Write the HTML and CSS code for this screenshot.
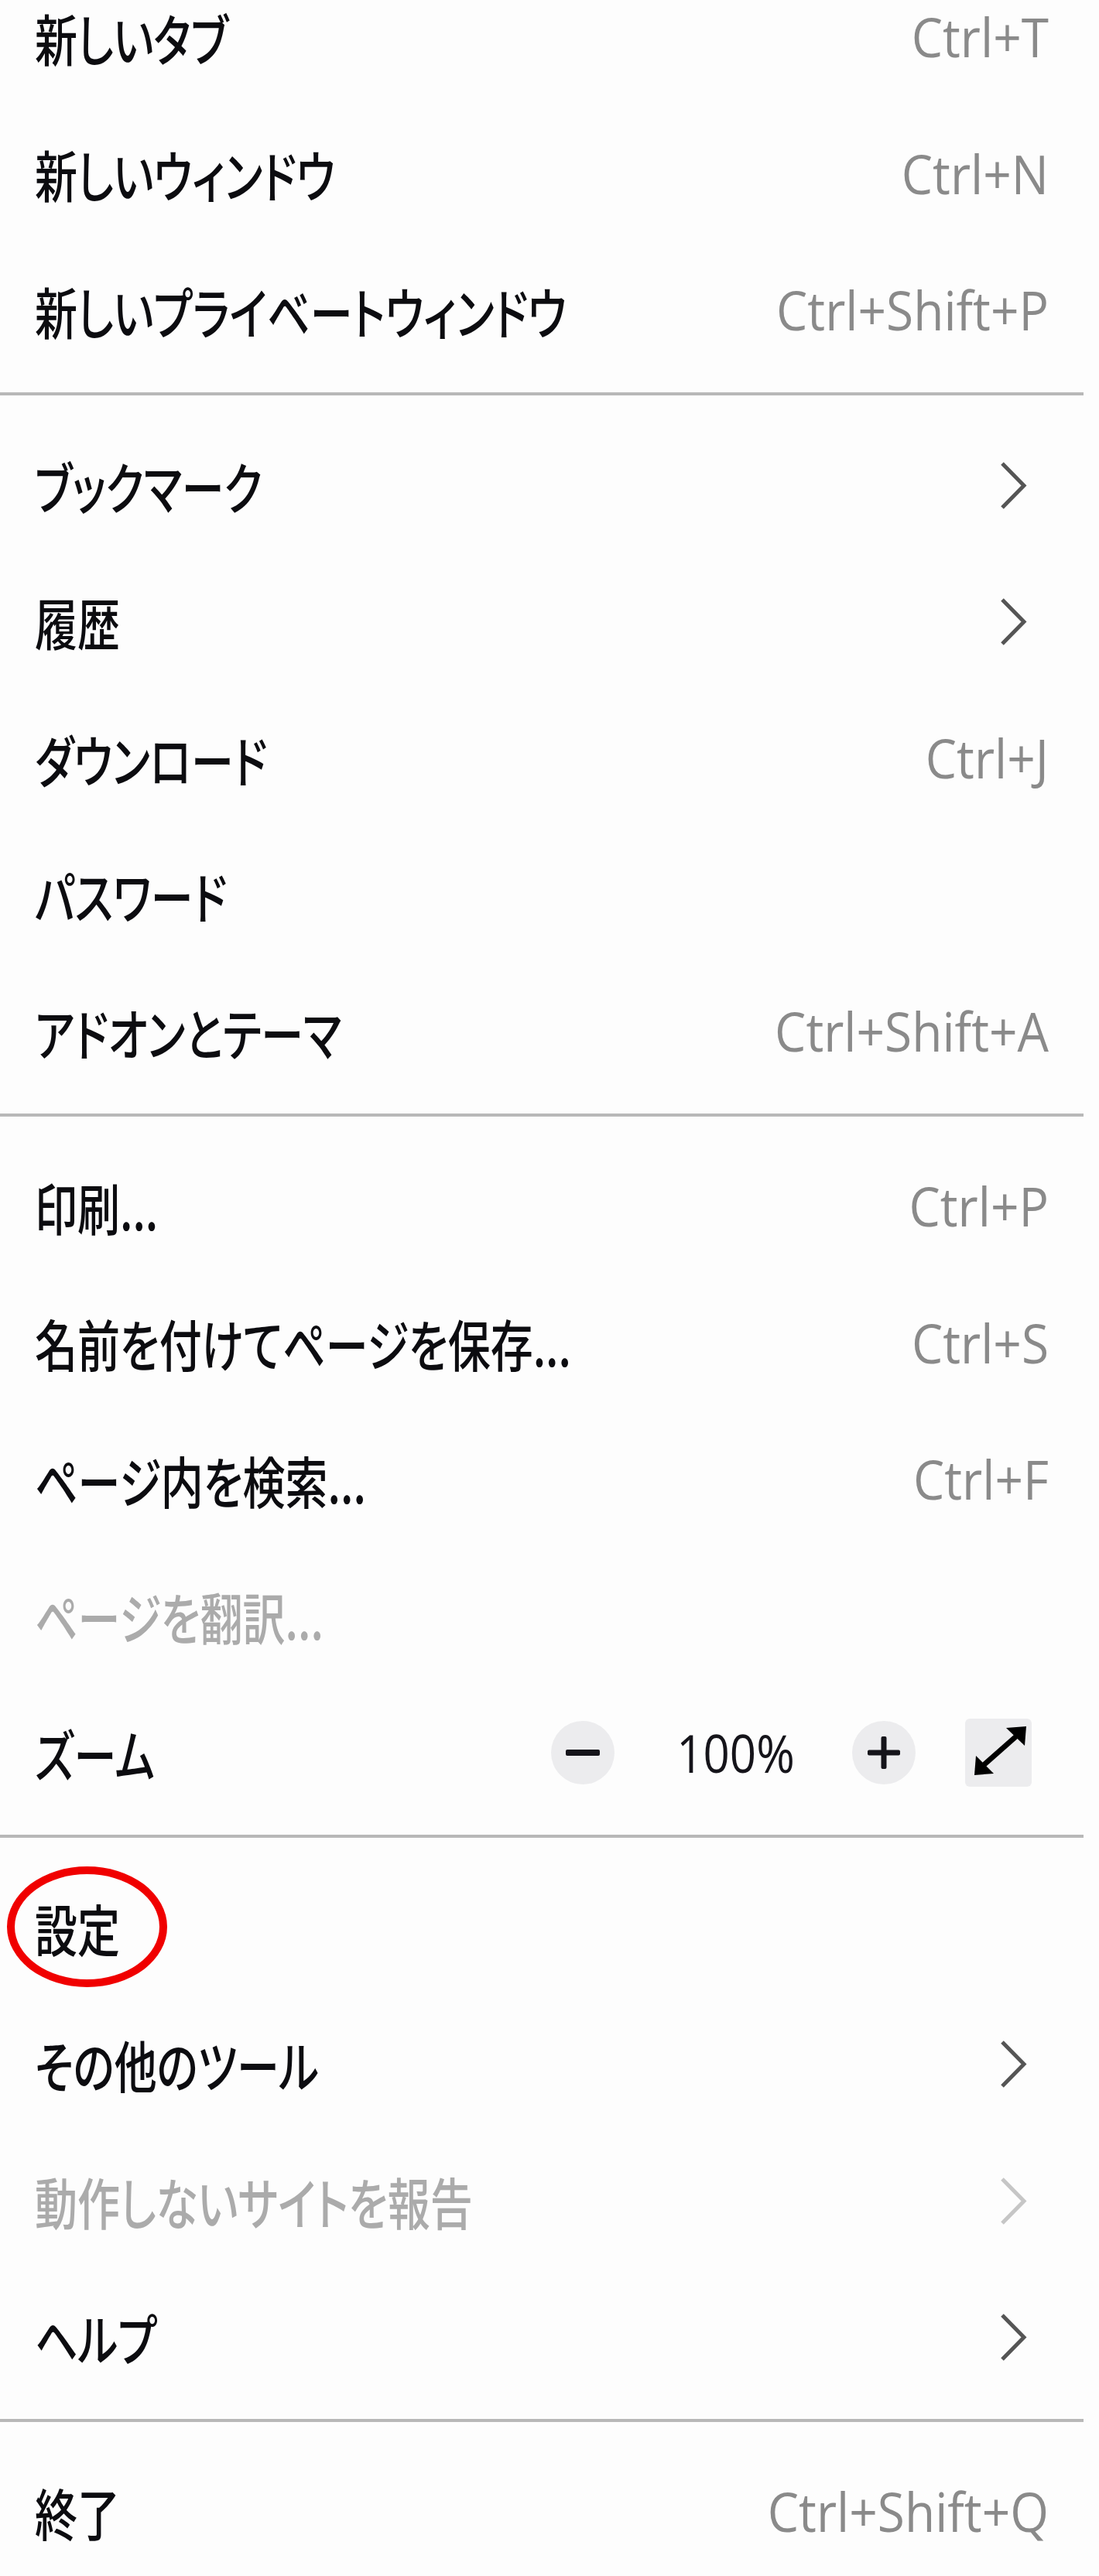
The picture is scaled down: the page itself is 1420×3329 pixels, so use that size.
FILE: index.html
```html
<!DOCTYPE html>
<html lang="ja">
<head>
<meta charset="utf-8">
<title>メニュー</title>
<link rel="stylesheet" href="styles.css">
</head>
<body>
<div class="menu">
  <div class="item"><span class="label">新しいタブ</span><span class="key">Ctrl+T</span></div>
  <div class="item"><span class="label">新しいウィンドウ</span><span class="key">Ctrl+N</span></div>
  <div class="item"><span class="label">新しいプライベートウィンドウ</span><span class="key">Ctrl+Shift+P</span></div>
  <div class="sep"></div>
  <div class="item"><span class="label">ブックマーク</span><svg class="chev" viewBox="0 0 38 65"><path d="M5 4 L33 32.5 L5 61"/></svg></div>
  <div class="item"><span class="label">履歴</span><svg class="chev" viewBox="0 0 38 65"><path d="M5 4 L33 32.5 L5 61"/></svg></div>
  <div class="item"><span class="label">ダウンロード</span><span class="key">Ctrl+J</span></div>
  <div class="item"><span class="label">パスワード</span></div>
  <div class="item"><span class="label">アドオンとテーマ</span><span class="key">Ctrl+Shift+A</span></div>
  <div class="sep"></div>
  <div class="item"><span class="label">印刷...</span><span class="key">Ctrl+P</span></div>
  <div class="item"><span class="label">名前を付けてページを保存...</span><span class="key">Ctrl+S</span></div>
  <div class="item"><span class="label">ページ内を検索...</span><span class="key">Ctrl+F</span></div>
  <div class="item disabled"><span class="label">ページを翻訳...</span></div>
  <div class="item"><span class="label">ズーム</span>
    <div class="zoom-ctrls">
      <div class="zround"><svg class="zicon" viewBox="0 0 44 44"><rect x="0" y="18" width="44" height="8" rx="2"/></svg></div>
      <span class="zval">100%</span>
      <div class="zround"><svg class="zicon" viewBox="0 0 44 44"><rect x="1" y="18.5" width="42" height="7" rx="2"/><rect x="18.5" y="1" width="7" height="42" rx="2"/></svg></div>
      <div class="zsq"><svg class="zexp" viewBox="0 0 86 88"><line x1="24" y1="60" x2="67" y2="22"/><polygon points="79,10 53,12 77,35"/><polygon points="12,73 14,48 37,71"/></svg></div>
    </div>
  </div>
  <div class="sep"></div>
  <div class="item"><span class="label">設定</span><span class="ring"></span></div>
  <div class="item"><span class="label">その他のツール</span><svg class="chev" viewBox="0 0 38 65"><path d="M5 4 L33 32.5 L5 61"/></svg></div>
  <div class="item disabled"><span class="label">動作しないサイトを報告</span><svg class="chev" viewBox="0 0 38 65"><path d="M5 4 L33 32.5 L5 61"/></svg></div>
  <div class="item"><span class="label">ヘルプ</span><svg class="chev" viewBox="0 0 38 65"><path d="M5 4 L33 32.5 L5 61"/></svg></div>
  <div class="sep"></div>
  <div class="item"><span class="label">終了</span><span class="key">Ctrl+Shift+Q</span></div>
</div>
</body>
</html>
```
FILE: styles.css
```css
html {
  overflow: hidden;
}
body {
  margin: 0;
  background: #fdfdfd;
  font-family: "Noto Sans CJK JP", "Open Sans", sans-serif;
}
.menu {
  width: 1400px;
  margin-top: -40px;
}
.item {
  position: relative;
  display: flex;
  align-items: center;
  height: 176.6px;
  padding: 0 45px;
  box-sizing: border-box;
}
.label {
  flex: 1;
  font-size: 55px;
  font-weight: 500;
  line-height: 1;
  color: #0c0c10;
  font-feature-settings: "palt";
  white-space: nowrap;
  transform: scaleY(1.3);
}
.key {
  font-family: "Open Sans", "Noto Sans", sans-serif;
  font-size: 64px;
  line-height: 1;
  color: #8a8a8a;
  white-space: nowrap;
  transform: scaleY(1.08);
}
.disabled .label {
  color: #ababab;
}
.chev {
  width: 38px;
  height: 65px;
  margin-right: 27px;
}
.chev path {
  fill: none;
  stroke: #555555;
  stroke-width: 5;
}
.disabled .chev path {
  stroke: #c6c6c6;
}
.sep {
  height: 4px;
  background: #b8b8b8;
  margin: 17px 0 28px;
}
.zoom-ctrls {
  display: flex;
  align-items: center;
}
.zround {
  width: 82px;
  height: 82px;
  border-radius: 50%;
  background: #ececee;
  display: flex;
  align-items: center;
  justify-content: center;
}
.zicon {
  width: 44px;
  height: 44px;
  fill: #15141a;
}
.zval {
  width: 155px;
  margin: 0 73px 0 79px;
  text-align: center;
  font-family: "Open Sans", "Noto Sans", sans-serif;
  font-size: 60px;
  line-height: 1;
  color: #15141a;
  transform: scaleY(1.12);
}
.zsq {
  width: 86px;
  height: 88px;
  margin-left: 64px;
  margin-right: 22px;
  border-radius: 6px;
  background: #ececee;
}
.zexp {
  display: block;
  width: 86px;
  height: 88px;
}
.zexp line {
  stroke: #000;
  stroke-width: 7;
}
.zexp polygon {
  fill: #000;
}
.ring {
  position: absolute;
  left: 9px;
  top: 9px;
  width: 207px;
  height: 156px;
  border: 10px solid #f00000;
  border-radius: 50%;
  box-sizing: border-box;
}
```
